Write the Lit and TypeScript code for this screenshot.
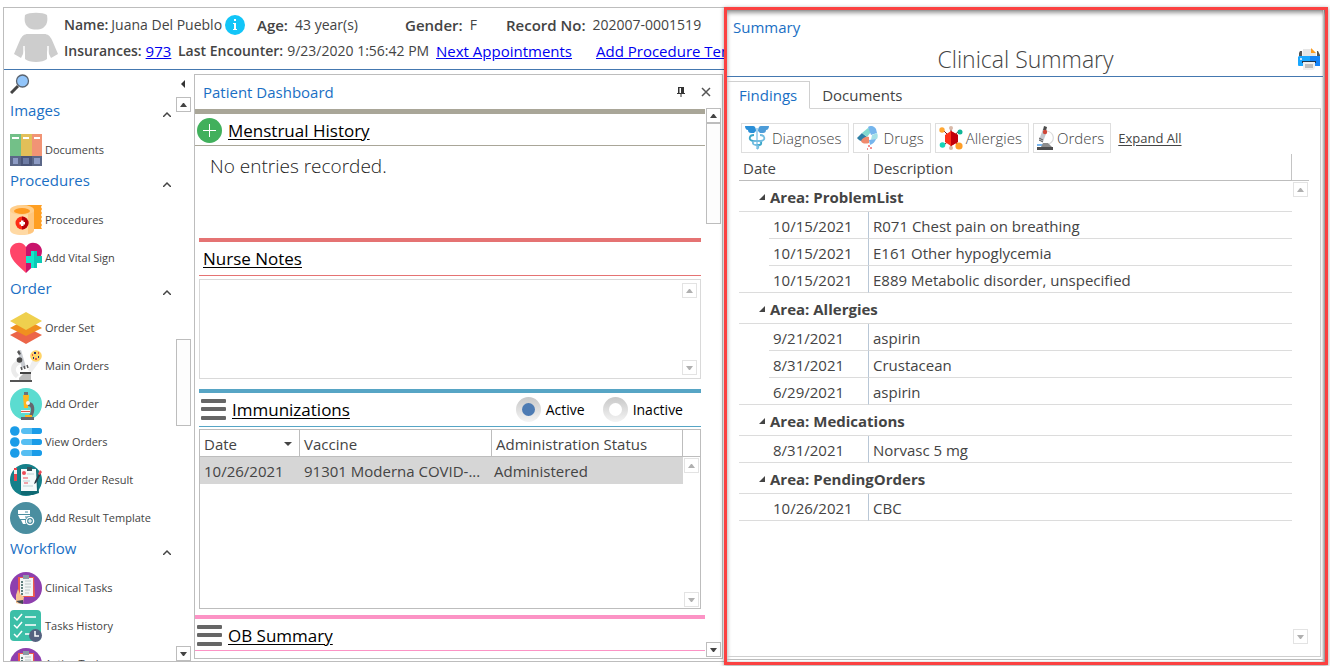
import { LitElement, html, css, svg } from "lit";
import { customElement, state } from "lit/decorators.js";

const icons: Record<string, unknown> = {
  binders: svg`
    <path fill="#73c088" d="M0 0h11v22H0z"/><path fill="#e2bf59" d="M11 0h11v22H11z"/><path fill="#f19475" d="M22 0h10v22H22z"/>
    <path fill="#5b6788" d="M0 22h11v10H0zM22 22h10v10H22z"/><path fill="#4a5578" d="M11 22h11v10H11z"/>
    <path fill="#fff" d="M2 3h7v2H2zM13 3h6v2h-6zM24 3h6v2h-6z"/>
    <path fill="#8d9bc4" d="M3 24h5v6H3zM24 24h6v6h-6z"/><path fill="#6d7ba4" d="M13 24h6v6h-6z"/>`,
  bandage: svg`
    <path fill="#ff9f22" d="M12 1h20l-1 2 1 2-1 2 1 2-1 2 1 2-1 2 1 2-1 2 1 2-1 2 1 2H20z"/>
    <path fill="#ffd9a4" d="M0 6v20c0 3 5 5 12 5s12-2 12-5V6z"/>
    <path fill="#ffc67e" d="M18 10l6-3v19c0 2-2 3-6 4z"/>
    <ellipse cx="12" cy="6" rx="12" ry="5" fill="#ffcf8d"/><ellipse cx="12" cy="7" rx="8" ry="3" fill="#ff9a1f"/>
    <circle cx="12" cy="19" r="6.500" fill="#ff2d16"/><path d="M12 12.500a6.500 6.500 0 0 1 0 13z" fill="#b80009"/>
    <path d="M11 16.500h2.500V18H15v2.500h-1.500V22H11v-1.500H9.500V18H11z" fill="#fff"/>`,
  heart: svg`
    <path fill="#ff4569" d="M16 31C9 24 0 18 0 9c0-8 12-12 16-4z"/>
    <path fill="#c8146c" d="M16 31c7-7 16-13 16-22 0-8-12-12-16-4z"/>
    <path fill="#14e6cb" d="M21 9h4v17h-4v-5h-5v-7h5z"/><path fill="#0bc9b5" d="M25 9h2v5h5v7h-5v5h-3V9z"/>`,
  layers: svg`
    <path fill="#ec6548" d="M16 15l16 8-16 9L0 23z"/><path fill="#f0901f" d="M16 7l16 9-16 8L0 16z"/>
    <path fill="#efd04e" d="M16 0l16 9-16 9L0 9z"/>`,
  scopeSample: svg`
    <path d="M18 20L23 9l7 2-9 12z" fill="#efefef"/>
    <path d="M9 10C-1 13-1 23 6 28l3-3c-5-4-4-9 2-11z" fill="#ebebeb"/>
    <path d="M8 1l3-1 5 17-4 2z" fill="#c9ccd1"/><path d="M7 2l2-2 2 4-2 1z" fill="#555"/>
    <circle cx="9.500" cy="10" r="2.800" fill="#4a4a4a"/>
    <path d="M11 17l1 3M14 16l1 3M17 15l1 3" stroke="#555" stroke-width="1.500"/>
    <circle cx="26" cy="6" r="5.800" fill="#ffd469"/>
    <path d="M24 3h2M28 7h1M23 8h1" stroke="#20306b" stroke-width="2"/><path d="M25 9h2M28 3h1M22 5h1" stroke="#e5343d" stroke-width="1.500"/>
    <path d="M10 22h11v2H10z" fill="#444"/><path d="M13 24h8v6H9v-2z" fill="#bcbcbc"/><path d="M0 30h22v2H0z" fill="#555"/>`,
  scopeTeal: svg`
    <circle cx="16" cy="16" r="16" fill="#5bdcd0"/>
    <path d="M14 4h4v3h-4z" fill="#6b7177"/><path d="M13 7h6l-1 13h-4z" fill="#ffb61f"/>
    <path d="M18 14c7-1 8 9 4 15h-4c4-5 4-11 0-11z" fill="#66666e"/>
    <circle cx="18" cy="15" r="2" fill="#f4f4f4"/>
    <path d="M11 22h9v3h-9z" fill="#f6f6f6"/><path d="M11 23h9v1h-9z" fill="#e65a46"/>
    <path d="M15 27h7v2h-7z" fill="#ffb61f"/><path d="M11 29h13v3H11z" fill="#66666e"/>`,
  bullets: svg`
    ${[5, 16, 27].map((y) => svg`<circle cx="4.800" cy=${y} r="4.800" fill="#1a9ce8"/>
      <rect x="11" y=${y - 3} width="21" height="6" rx="3" fill="#56bef2"/>
      <path d="M22 ${y - 3}h7a3 3 0 0 1 0 6h-7z" fill="#1a9ce8"/>`)}`,
  orderResult: svg`
    <circle cx="16" cy="16" r="16" fill="#15808a"/>
    <path d="M10 5h17l2 24-6 2H11z" fill="#0e6973"/><path d="M11 5h15l1 22H11z" fill="#f4fafb"/>
    <path d="M17 3h5v4h-5z" fill="#38545c"/><circle cx="14" cy="9" r="2" fill="#ed4b57"/>
    <path d="M4 4h3v13H4z" fill="#e8464f"/><path d="M4 6h3v4H4z" fill="#fbe9e9"/>
    <path d="M17 10h7M13 17h7M13 22h10" stroke="#bcd3d6" stroke-width="1"/><path d="M13 14h5M14 19h4" stroke="#ed4b57"/>
    <path d="M30 8l1 2-5 9-2 1 1-3z" fill="#2c3c48"/><path d="M30 6l2 2-2 3-2-1z" fill="#ed4b57"/>`,
  resultTemplate: svg`
    <circle cx="16" cy="16" r="16" fill="#4a8ea0"/>
    <path fill="#fff" d="M8 8h12v4H8zM8 13h12v4H10zM11 18h7v4h-5z"/>
    <path d="M15 10h3M15 15h3" stroke="#4a8ea0"/>
    <circle cx="20" cy="19" r="5" fill="#4a8ea0"/><circle cx="20" cy="19" r="3.600" fill="none" stroke="#fff" stroke-width="1.300"/>
    <path d="M20 17v4M18 19h4" stroke="#fff" stroke-width="1.200"/>`,
  clinicalTasks: svg`
    <circle cx="16" cy="16" r="16" fill="#8e3fae"/>
    <path d="M8 5h16l1 20H8z" fill="#ee5a4e"/><path d="M10 6h13v18H10z" fill="#f2f5f4"/>
    <path d="M13 3h6v4h-6z" fill="#8b9aa5"/>
    <path d="M12 9v14" stroke="#5f7f7d" stroke-width="2" stroke-dasharray="2 1"/>
    <path d="M15 9h6M15 12h6M15 15h6M15 18h5M15 21h4" stroke="#bcc8c8"/>
    <path d="M6 31v-8l2-6 2 5 4 3-1 6-3 1z" fill="#f8c392"/><path d="M6 29l7-1v4l-4-1z" fill="#434b57"/>`,
  tasksHistory: svg`
    <rect width="31" height="31" rx="4" fill="#3cbfa8"/>
    <path d="M4 7l3 3 5-6M4 15l3 3 5-6M4 24l3 3 5-6M15 7h11M15 15h11M15 24h5" fill="none" stroke="#fff" stroke-width="1.500"/>
    <circle cx="25.500" cy="25.500" r="6.500" fill="#55617f"/><path d="M25 21v5h4" fill="none" stroke="#fff" stroke-width="1.500"/>`,
  caduceus: svg`
    <path d="M0 0h8c2 0 3 2 3 5l-2 2H6C4 7 3 6 3 4 1 4 0 2 0 0z" fill="#2a8fd8"/>
    <path d="M24 0h-8c-2 0-3 2-3 5l2 2h3c2 0 3-1 3-3 2 0 3-2 3-4z" fill="#4d9cd8"/>
    <path d="M11 2h2v21h-2z" fill="#a9d5ee"/>
    <path d="M9 9c-5 0-6 5-1 6h6c3 0 3 4 0 4h-2" fill="none" stroke="#3ba7c9" stroke-width="1.800"/>
    <path d="M15 9c5 0 6 5 1 6h-6c-3 0-3 4 1 4 3 0 3 3 1 4" fill="none" stroke="#73bde0" stroke-width="1.800"/>`,
  pills: svg`
    <path d="M0 12l5-5 5 4-3 5c-3-1-6-2-7-4z" fill="#2e7fa5"/>
    <path d="M5 7l6-5c2 1 3 2 3 4l-4 5z" fill="#82d9cf"/>
    <path d="M11 1c3-2 6-1 8 2l1 4-6 2z" fill="#75b5ed"/>
    <path d="M4 15c1-3 5-5 8-4v6c-3 1-7 1-8-2z" fill="#f08a6d"/>
    <path d="M15 9l5-2c1 2 1 4 0 6l-6 1z" fill="#a4e0e6"/>
    <path d="M12 14l7-1c-1 3-3 5-6 6z" fill="#75b5ed"/>
    <path d="M11 20h2M13 22h2M10 23h1" stroke="#ef6a6a" stroke-width="1.500"/>`,
  allergen: svg`
    <path d="M3 3l18 18M21 4L4 20M12 1v22" stroke="#7e1515" stroke-width="1"/>
    <path d="M12 5l7 4v7l-7 4-6-4V9z" fill="#ff3019"/><path d="M12 5l7 4v7l-7 4z" fill="#c3000c"/>
    <circle cx="3" cy="4" r="2.700" fill="#ffa733"/><circle cx="20" cy="20" r="3.600" fill="#ff9d26"/>
    <circle cx="21" cy="6" r="2.500" fill="#0fb597"/><circle cx="3.500" cy="19" r="2.800" fill="#17d5b9"/>
    <circle cx="12" cy="2" r="2" fill="#d8b9a8"/><circle cx="12" cy="22" r="2" fill="#d8b9a8"/>`,
  orderScope: svg`
    <path d="M10 5c8 2 8 10 2 13" fill="none" stroke="#dcdcdc" stroke-width="1.200"/>
    <path d="M6 3l4 2-4 11-4-2z" fill="#c3c7cd"/><path d="M7 0l3 1-1 4-3-1z" fill="#4b4b4b"/>
    <circle cx="8" cy="6" r="2.200" fill="#ce4638"/><path d="M2 14l4 2M2 12l4 2" stroke="#555"/>
    <path d="M0 18h8v2H0z" fill="#78b6f0"/><path d="M6 17h5l4 4H4z" fill="#8c8c8c"/><path d="M0 21h16v3H0z" fill="#4d4d4d"/>`,
  printer: svg`
    <path d="M2 3h2v6H1V5zM19 3h1l2 4v3h-3z" fill="#555"/><path d="M5 1h9l4 4v7H4z" fill="#e6e6e6"/>
    <path d="M13 0l5 5h-5z" fill="#ff9b1c"/><path d="M1 8h21v10H1a1 1 0 0 1-1-1V9z" fill="#1aa7ff"/>
    <path d="M12 8h9l1 1v9H12z" fill="#1683f7"/><path d="M4 13h14v2H4z" fill="#20364d"/>
    <path d="M5 14h12v6l-2 2H5z" fill="#efefef"/><path d="M7 17h8M7 19h8" stroke="#8c8c8c"/><path d="M2 11h2" stroke="#fff" stroke-width="1.500"/>`,
};

const icon = (name: string, cls: string, width: number, height = width) =>
  html`<svg class=${cls} width=${width} height=${height} viewBox="0 0 ${width} ${height}" aria-hidden="true">${icons[name]}</svg>`;

const NAV = [
  { title: "Images", items: [["binders", "Documents"]] },
  { title: "Procedures", items: [["bandage", "Procedures"], ["heart", "Add Vital Sign"]] },
  {
    title: "Order",
    items: [
      ["layers", "Order Set"],
      ["scopeSample", "Main Orders"],
      ["scopeTeal", "Add Order"],
      ["bullets", "View Orders"],
      ["orderResult", "Add Order Result"],
      ["resultTemplate", "Add Result Template"],
    ],
  },
  {
    title: "Workflow",
    items: [["clinicalTasks", "Clinical Tasks"], ["tasksHistory", "Tasks History"], ["clinicalTasks", "Active Tasks"]],
  },
];

const FINDINGS = [
  {
    area: "ProblemList",
    rows: [
      ["10/15/2021", "R071 Chest pain on breathing"],
      ["10/15/2021", "E161 Other hypoglycemia"],
      ["10/15/2021", "E889 Metabolic disorder, unspecified"],
    ],
  },
  { area: "Allergies", rows: [["9/21/2021", "aspirin"], ["8/31/2021", "Crustacean"], ["6/29/2021", "aspirin"]] },
  { area: "Medications", rows: [["8/31/2021", "Norvasc 5 mg"]] },
  { area: "PendingOrders", rows: [["10/26/2021", "CBC"]] },
];

const FILTERS: [string, string, number][] = [
  ["caduceus", "Diagnoses", 24],
  ["pills", "Drugs", 24],
  ["allergen", "Allergies", 24],
  ["orderScope", "Orders", 17],
];

const base = css`
  :host, *, *::before, *::after { box-sizing: border-box; }
  button { font: inherit; color: inherit; background: none; border: 0; padding: 0; text-align: left; }
  h1, h2, h3, p { margin: 0; font-weight: 400; }
  svg { display: block; flex: none; }
`;

@customElement("scroll-rail")
class ScrollRail extends LitElement {
  static properties = { thumb: { type: String, reflect: true } };
  static styles = [base, css`
    :host { display: flex; flex-direction: column; flex: none; width: 15px; color: #444; --edge: #bdbdbd; }
    :host([thumb="none"]) { color: #b0b0b0; --edge: #e3e3e3; }
    .step { width: 15px; height: 15px; flex: none; border: 1px solid var(--edge); display: grid; place-items: center; background: #fff; }
    .step svg { width: 7px; height: 4px; fill: currentColor; }
    .track { flex: 1; display: flex; flex-direction: column; min-height: 0; }
    .before { flex: 0 0 0; }
    .thumb { border: 1px solid var(--edge); background: #fdfdfd; flex: 0 0 101px; }
    :host([thumb="middle"]) .before { flex: 0 0 227px; }
    :host([thumb="middle"]) .thumb { flex-basis: 87px; }
    :host([thumb="none"]) .thumb { display: none; }
  `];
  render() {
    return html`
      <button class="step" aria-label="Scroll up"><svg viewBox="0 0 7 4"><path d="M3 0h1l3 4H0z"/></svg></button>
      <div class="track"><div class="before"></div><div class="thumb"></div></div>
      <button class="step" aria-label="Scroll down"><svg viewBox="0 0 7 4"><path d="M0 0h7L4 4H3z"/></svg></button>`;
  }
}

@customElement("patient-header")
class PatientHeader extends LitElement {
  static styles = [base, css`
    :host { display: flex; height: 62px; border-bottom: 1px solid #4478b0; overflow: hidden; padding: 3px 0 0 10px; flex: none; font-size: 14px; }
    .avatar { width: 44px; height: 52px; margin-right: 6px; }
    .lines { display: grid; align-content: start; gap: 1px; min-width: 0; }
    .line { display: flex; align-items: center; height: 25px; white-space: nowrap; padding-top: 2px; }
    .cell { display: flex; align-items: center; flex: none; gap: 4px; }
    .wide { gap: 7px; }
    .tight { gap: 3px; }
    .name { width: 193px; }
    .age { width: 148px; }
    .gender { width: 101px; }
    .ins { width: 114px; }
    .enc { width: 258px; }
    .next { width: 160px; }
    b { font-weight: 600; }
    .wide b, a { font-size: 15px; }
    a { color: #0000f0; }
    .info { width: 20px; height: 20px; }
  `];
  render() {
    return html`
      <svg class="avatar" viewBox="0 0 44 52" aria-hidden="true">
        <g fill="#cdcdcd">
          <path d="M11 4c4-3 18-3 22 0 1 6 0 10-4 13-4 2-10 2-14 0-4-3-5-7-4-13z"/>
          <path d="M14 23h16c4 0 6 2 8 6l6 14-7 4-4-8v9c-4 4-18 4-22 0v-9l-4 8-7-4 6-14c2-4 4-6 8-6z"/>
        </g>
        <path d="M10 35v13M34 35v13" stroke="#fff" stroke-width="1.500"/>
      </svg>
      <div class="lines">
        <div class="line">
          <span class="cell tight name"><b>Name:</b><span>Juana Del Pueblo</span>
            <svg class="info" viewBox="0 0 20 20" role="img" aria-label="Patient information"><circle cx="10" cy="10" r="10" fill="#12c5f8"/><path d="M9 4h2v2H9zM8 8h3v6h1v1H8v-1h1V9H8z" fill="#fff"/></svg>
          </span>
          <span class="cell wide age"><b>Age:</b><span>43 year(s)</span></span>
          <span class="cell wide gender"><b>Gender:</b><span>F</span></span>
          <span class="cell wide"><b>Record No:</b><span>202007-0001519</span></span>
        </div>
        <div class="line">
          <span class="cell ins"><b>Insurances:</b><a href="#insurances">973</a></span>
          <span class="cell enc"><b>Last Encounter:</b><span>9/23/2020 1:56:42 PM</span></span>
          <span class="cell next"><a href="#appointments">Next Appointments</a></span>
          <span class="cell"><a href="#procedure">Add Procedure Template</a></span>
        </div>
      </div>`;
  }
}

@customElement("nav-sidebar")
class NavSidebar extends LitElement {
  static styles = [base, css`
    :host { display: flex; flex-direction: column; min-height: 0; overflow: hidden; padding: 0 3px 0 6px; }
    .tools { display: flex; justify-content: space-between; align-items: center; height: 27px; padding-right: 5px; flex: none; }
    .search { width: 20px; height: 20px; }
    .fold { width: 6px; height: 8px; fill: #333; }
    .body { display: flex; flex: 1; min-height: 0; }
    nav { flex: 1; min-width: 0; padding-top: 2px; overflow: hidden; }
    .group { display: flex; justify-content: space-between; align-items: center; width: 100%; height: 24px; margin-bottom: 8px; padding: 0 5px 2px 0; font-size: 15px; color: #1a6fc4; }
    .chevron { width: 8px; height: 14px; fill: none; stroke: #444; stroke-width: 1.5; }
    .item { display: flex; align-items: center; gap: 3px; width: 100%; height: 38px; font-size: 11px; white-space: nowrap; }
  `];
  render() {
    return html`
      <div class="tools">
        <button aria-label="Search">
          <svg class="search" viewBox="0 0 20 20"><path d="M1 19l7-7" stroke="#444" stroke-width="3"/><circle cx="12.500" cy="7" r="6" fill="#92c5fa" stroke="#5a6470" stroke-width="1.300"/></svg>
        </button>
        <button aria-label="Collapse sidebar"><svg class="fold" viewBox="0 0 6 8"><path d="M5 0v8L1 4z"/></svg></button>
      </div>
      <div class="body">
        <nav>
          ${NAV.map((g) => html`
            <button class="group">${g.title}<svg class="chevron" viewBox="0 0 8 14"><path d="M0 14l4-4 4 4"/></svg></button>
            ${g.items.map(([name, label]) => html`<button class="item">${icon(name, "pic", 32)}${label}</button>`)}
          `)}
        </nav>
        <scroll-rail thumb="middle"></scroll-rail>
      </div>`;
  }
}

@customElement("patient-dashboard")
class PatientDashboard extends LitElement {
  @state() status = "Active";
  static styles = [base, css`
    :host { display: flex; flex-direction: column; min-height: 0; min-width: 0; border: 1px solid #bdbdbd; margin: 4px 0 2px; }
    .title { display: flex; align-items: center; height: 33px; padding: 0 11px 0 8px; flex: none; color: #1a6fc4; }
    .title h2 { font-size: 15px; flex: 1; }
    .pin { width: 8px; height: 10px; margin-right: 16px; }
    .close { width: 10px; height: 10px; }
    .body { display: flex; flex: 1; min-height: 0; padding: 0 1px 1px 0; }
    .content { flex: 1; min-width: 0; overflow: hidden; padding: 1px 1px 0 0; }
    section { border-top: 4px solid var(--tone); }
    .inner { margin: 0 4px; }
    header { display: flex; align-items: center; gap: 6px; height: 32px; padding: 2px 0 0 2px; border-bottom: 1px solid var(--tone); color: #000; }
    .inner header { height: 34px; padding-top: 0; }
    .inner .text { padding-left: 4px; }
    h3 { font-size: 17px; text-decoration: underline; text-underline-offset: 2px; flex: 1; }
    .sage { --tone: #a9a698; border-top-width: 5px; }
    .coral { --tone: #e57373; }
    .sky { --tone: #57a5c5; }
    .pink { --tone: #fc93c5; }
    .empty { height: 92px; padding: 6px 15px; font-size: 19px; font-weight: 300; line-height: 28px; color: #222; }
    .badge { width: 25px; height: 25px; }
    .menu { width: 25px; height: 21px; }
    .frame { display: flex; margin: 3px 0 10px; height: 100px; border: 1px solid #d9d9d9; padding: 3px; }
    textarea { flex: 1; min-width: 0; border: 0; outline: 0; resize: none; font: inherit; background: none; }
    .grid { display: grid; grid-template-columns: minmax(0, 1fr) 17px; margin: 2px 0 6px; height: 180px; border: 1px solid #bdbdbd; }
    table { align-self: start; width: 100%; border-collapse: separate; border-spacing: 0; table-layout: fixed; font-size: 15px; }
    th, td { font-weight: 400; text-align: left; height: 27px; padding: 2px 4px 0; overflow: hidden; text-overflow: ellipsis; white-space: nowrap; }
    th { border-bottom: 1px solid #bdbdbd; border-right: 1px solid #bdbdbd; }
    td { background: #d6d6d6; padding-top: 0; }
    td:last-child { padding-left: 2px; }
    .date { width: 100px; }
    .vaccine { width: 192px; }
    .sort { display: flex; justify-content: space-between; align-items: center; padding-right: 3px; }
    .sort svg { width: 8px; height: 4px; fill: #444; }
    .side { display: flex; flex-direction: column; padding: 0 1px 1px; }
    .corner { height: 27px; flex: none; border-bottom: 1px solid #bdbdbd; margin: 0 -1px 1px; }
    .fill { flex: 1; }
    .choice { display: flex; align-items: center; gap: 5px; font-size: 14px; margin-right: 12px; }
    .choice input { appearance: none; width: 25px; height: 25px; margin: 0; border-radius: 50%; display: grid; place-items: center; background: linear-gradient(#c8c8c8, #f4f4f4); }
    .choice input::before { content: ""; width: 13px; height: 13px; border-radius: 50%; background: #fff; }
    .choice input:checked::before { background: #4d7bb3; }
    .choice:last-child { margin-right: 18px; }
  `];
  render() {
    const menu = html`<svg class="menu" viewBox="0 0 25 21" aria-hidden="true"><g fill="#666"><rect width="25" height="4" rx="1"/><rect y="8" width="25" height="4" rx="1"/><rect y="17" width="25" height="4" rx="1"/></g></svg>`;
    return html`
      <div class="title">
        <h2>Patient Dashboard</h2>
        <button aria-label="Pin"><svg class="pin" viewBox="0 0 8 10"><path d="M2 0h5v6h1v1H4.500v3h-1V7H0V6h1V0zM2.500 1v5H4V1z" fill="#333"/></svg></button>
        <button aria-label="Close"><svg class="close" viewBox="0 0 10 10"><path d="M1 1l8 8M9 1L1 9" stroke="#555" stroke-width="1.500"/></svg></button>
      </div>
      <div class="body">
        <div class="content">
          <section class="sage">
            <header>
              <svg class="badge" viewBox="0 0 25 25" role="img" aria-label="Add entry"><circle cx="12.500" cy="12.500" r="12.500" fill="#41b05c"/><path d="M12.500 6v13M6 12.500h13" stroke="#fff" stroke-width="1"/></svg>
              <h3>Menstrual History</h3>
            </header>
            <p class="empty">No entries recorded.</p>
          </section>
          <section class="inner coral">
            <header class="text"><h3 id="nurse">Nurse Notes</h3></header>
            <div class="frame"><textarea aria-labelledby="nurse"></textarea><scroll-rail thumb="none"></scroll-rail></div>
          </section>
          <section class="inner sky">
            <header>
              ${menu}<h3>Immunizations</h3>
              ${["Active", "Inactive"].map((s) => html`
                <label class="choice"><input type="radio" name="status" .checked=${this.status === s} @change=${() => (this.status = s)}>${s}</label>`)}
            </header>
            <div class="grid">
              <table>
                <thead><tr>
                  <th class="date"><div class="sort">Date<svg viewBox="0 0 8 4"><path d="M0 0h8L4 4z"/></svg></div></th>
                  <th class="vaccine">Vaccine</th>
                  <th>Administration Status</th>
                </tr></thead>
                <tbody><tr><td>10/26/2021</td><td>91301 Moderna COVID-...</td><td>Administered</td></tr></tbody>
              </table>
              <div class="side"><div class="corner"></div><scroll-rail class="fill" thumb="none"></scroll-rail></div>
            </div>
          </section>
          <section class="pink">
            <header>${menu}<h3>OB Summary</h3></header>
          </section>
        </div>
        <scroll-rail thumb="top"></scroll-rail>
      </div>`;
  }
}

@customElement("clinical-summary")
class ClinicalSummary extends LitElement {
  @state() tab = "Findings";
  static styles = [base, css`
    :host { display: flex; min-width: 0; min-height: 0; border: 3px solid #fb4141; background: #fff; position: relative; z-index: 1; padding: 0 1px 2px 0; box-shadow: 0 1px 4px #0006, inset 0 3px 4px #0006, inset -2px 0 2px #0004; }
    .shell { flex: 1; display: flex; flex-direction: column; min-width: 0; min-height: 0; padding: 7px 0 2px; border: solid #bdbdbd; border-width: 0 1px 1px 0; }
    .caption { padding-left: 6px; line-height: 21px; color: #1a6fc4; }
    .head { display: grid; grid-template-columns: 22px 1fr 22px; align-items: center; height: 39px; padding: 3px 3px 0 4px; border-bottom: 1px solid #4478b0; }
    h1 { grid-column: 2; font-size: 23px; font-weight: 300; text-align: center; line-height: 34px; }
    .tabs { display: flex; margin: 4px 2px 0 0; height: 28px; }
    .tab { padding: 0 12px; border-bottom: 1px solid #d4d4d4; }
    .tab[aria-selected="true"] { color: #1a6fc4; border: 1px solid #d0d0d0; border-left: 0; border-bottom-color: transparent; }
    .rest { flex: 1; border-bottom: 1px solid #d4d4d4; }
    .page { flex: 1; display: flex; flex-direction: column; min-height: 0; margin-right: 2px; border: 1px solid #cfcfcf; border-width: 0 1px 1px 0; padding: 13px 11px 12px 12px; }
    .bar { display: flex; align-items: center; gap: 4px; padding: 0 0 1px 2px; height: 32px; }
    .filter { display: flex; align-items: center; gap: 3px; height: 30px; border: 1px solid #dedede; padding: 0 6px 0 3px; font-weight: 300; }
    .expand { margin-left: 3px; font-size: 13px; text-decoration: underline; text-underline-offset: 2px; }
    .list { display: grid; grid-template-columns: minmax(0, 1fr) 17px; flex: 1; min-height: 0; }
    .side { display: flex; flex-direction: column; padding: 0 1px; }
    .corner { height: 27px; flex: none; border-bottom: 1px solid #c4c4c4; margin: 0 -1px 1px; }
    .fill { flex: 1; }
    table { width: 100%; align-self: start; border-collapse: separate; border-spacing: 0; table-layout: fixed; font-size: 15px; }
    th, td { text-align: left; font-weight: 400; padding: 2px 4px 0; height: 27px; border-bottom: 1px solid #dcdcdc; }
    thead th { border-bottom-color: #bdbdbd; border-right: 1px solid #c4c4c4; }
    .gap { width: 30px; }
    .date { width: 100px; }
    .blank { border-bottom-color: transparent; }
    .last td { border-bottom-color: #dcdcdc; }
    .day { border-right: 1px solid #b9c7d6; }
    .area { height: 31px; padding: 2px 20px 0; font-weight: 700; }
    .area button { display: flex; align-items: center; gap: 5px; }
    .area svg { width: 6px; height: 6px; fill: #444; }
  `];
  render() {
    return html`
      <div class="shell">
        <div class="caption">Summary</div>
        <div class="head">
          <h1>Clinical Summary</h1>
          <button aria-label="Print">${icon("printer", "print", 22)}</button>
        </div>
        <div class="tabs" role="tablist">
          ${["Findings", "Documents"].map((t) => html`<button class="tab" role="tab" aria-selected=${this.tab === t} @click=${() => (this.tab = t)}>${t}</button>`)}
          <div class="rest"></div>
        </div>
        <div class="page">
          <div class="bar">
            ${FILTERS.map(([name, label, width]) => html`<button class="filter">${icon(name, "pic", width, 24)}${label}</button>`)}
            <button class="expand">Expand All</button>
          </div>
          <div class="list">
            <table>
              <colgroup><col class="gap"><col class="date"><col></colgroup>
              <thead><tr><th colspan="2">Date</th><th>Description</th></tr></thead>
              <tbody>
                ${FINDINGS.map((g) => html`
                  <tr><th class="area" colspan="3"><button><svg viewBox="0 0 6 6"><path d="M6 0v6H0z"/></svg>Area: ${g.area}</button></th></tr>
                  ${g.rows.map(([day, text], i) => html`
                    <tr class=${i === g.rows.length - 1 ? "last" : ""}><td class="blank"></td><td class="day">${day}</td><td>${text}</td></tr>`)}
                `)}
              </tbody>
            </table>
            <div class="side"><div class="corner"></div><scroll-rail class="fill" thumb="none"></scroll-rail></div>
          </div>
        </div>
      </div>`;
  }
}

@customElement("app-root")
class AppRoot extends LitElement {
  static styles = [base, css`
    :host { display: grid; grid-template-columns: minmax(0, 1fr) minmax(440px, 604px); grid-template-rows: minmax(0, 1fr); height: 100vh; padding: 7px 2px 1px 3px; background: #fff; color: #444; font: 15px/20px "Open Sans", "Noto Sans", sans-serif; }
    .chart { display: flex; flex-direction: column; min-width: 0; min-height: 0; border: 1px solid #bdbdbd; border-right: 0; margin-bottom: 3px; }
    .work { display: grid; grid-template-columns: 190px minmax(0, 1fr); grid-template-rows: minmax(0, 1fr); flex: 1; min-height: 0; padding-right: 1px; }
  `];
  render() {
    return html`
      <main class="chart">
        <patient-header></patient-header>
        <div class="work"><nav-sidebar></nav-sidebar><patient-dashboard></patient-dashboard></div>
      </main>
      <clinical-summary></clinical-summary>`;
  }
}
